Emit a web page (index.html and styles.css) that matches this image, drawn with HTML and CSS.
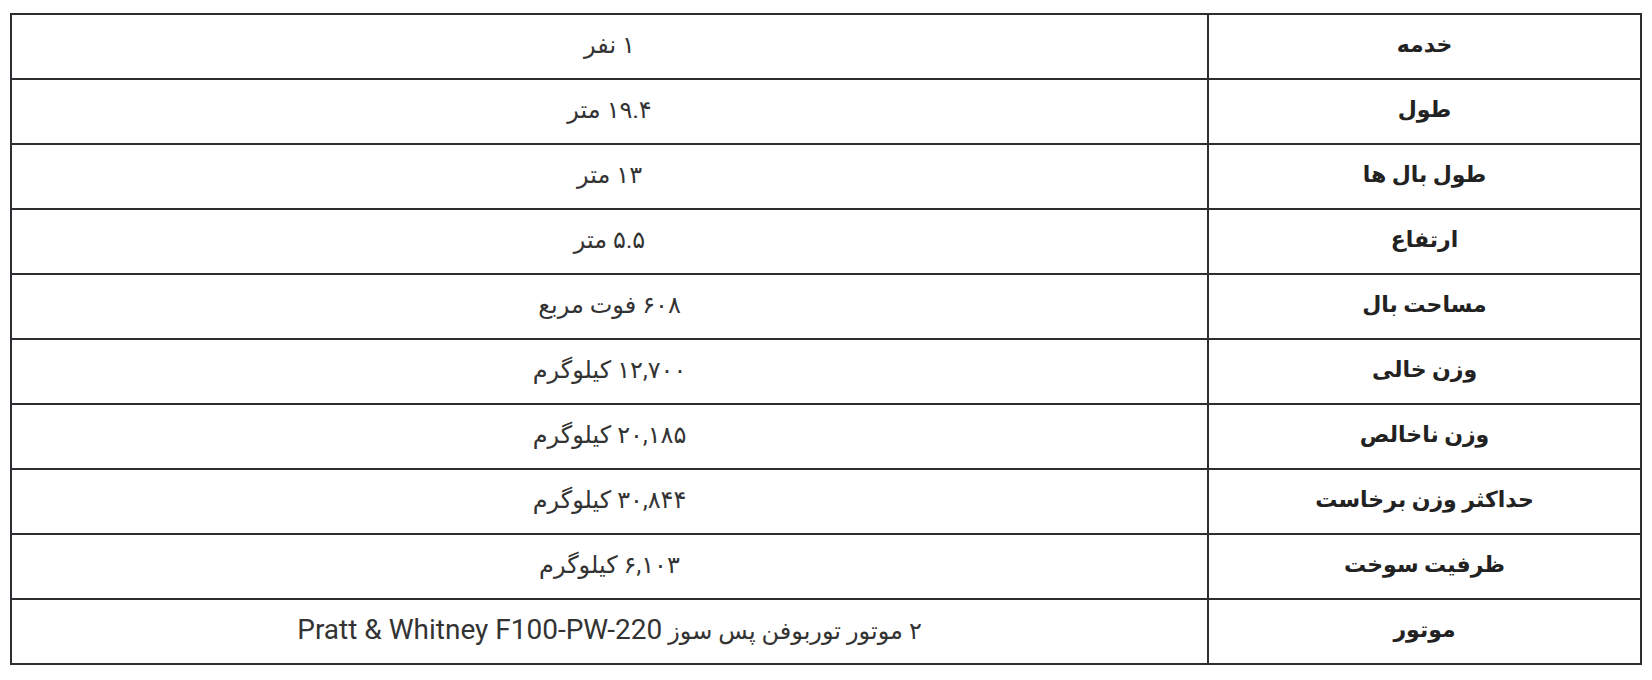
FILE: index.html
```html
<!DOCTYPE html>
<html lang="fa" dir="rtl">
<head>
<meta charset="utf-8">
<link rel="stylesheet" href="styles.css">
</head>
<body>
<div class="wrap">
<table class="specs">
<tbody>
<tr><th>خدمه</th><td>۱ نفر</td></tr>
<tr><th>طول</th><td>۱۹.۴ متر</td></tr>
<tr><th>طول بال ها</th><td>۱۳ متر</td></tr>
<tr><th>ارتفاع</th><td>۵.۵ متر</td></tr>
<tr><th>مساحت بال</th><td>۶۰۸ فوت مربع</td></tr>
<tr><th>وزن خالی</th><td>۱۲,۷۰۰ کیلوگرم</td></tr>
<tr><th>وزن ناخالص</th><td>۲۰,۱۸۵ کیلوگرم</td></tr>
<tr><th>حداکثر وزن برخاست</th><td>۳۰,۸۴۴ کیلوگرم</td></tr>
<tr><th>ظرفیت سوخت</th><td>۶,۱۰۳ کیلوگرم</td></tr>
<tr><th>موتور</th><td>۲ موتور توربوفن پس سوز <span class="latin">Pratt &amp; Whitney F100-PW-220</span></td></tr>
</tbody>
</table>
</div>
</body>
</html>
```
FILE: styles.css
```css
html, body {
  margin: 0;
  padding: 0;
  background: #ffffff;
}
.wrap {
  padding: 13px 10px 0 10px;
}
.specs {
  width: 1632px;
  border-collapse: collapse;
  font-family: Roboto, "DejaVu Sans", sans-serif;
  color: #333333;
}
.specs tr {
  height: 65px;
}
.specs th, .specs td {
  border: 2px solid #2c2e31;
  padding: 0 10px 4px 10px;
  text-align: center;
  vertical-align: middle;
}
.specs th {
  width: 411px;
  font-size: 22px;
  font-weight: bold;
  color: #222222;
}
.specs td {
  font-size: 24px;
  font-weight: normal;
}
.latin {
  font-size: 28px;
}
```
